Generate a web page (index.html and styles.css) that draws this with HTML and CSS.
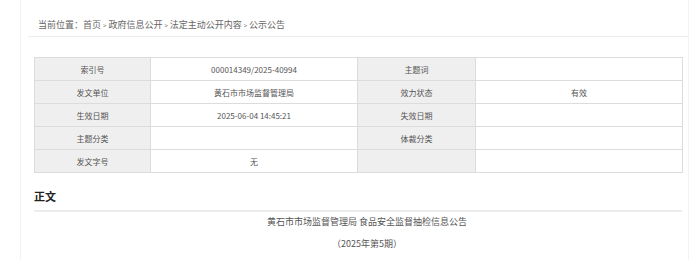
FILE: index.html
```html
<!DOCTYPE html>
<html lang="zh-CN">
<head>
  <meta charset="UTF-8" />
  <meta name="viewport" content="width=device-width, initial-scale=1" />
  <title>公示公告</title>
  <link rel="stylesheet" href="styles.css">
</head>
<body>

  <div class="page">
    <div class="crumb">
      当前位置：<a href="#">首页</a><span class="sep">&gt;</span><a href="#">政府信息公开</a><span class="sep">&gt;</span><a href="#">法定主动公开内容</a><span class="sep">&gt;</span><a href="#">公示公告</a>
    </div>

    <div class="content">
      <table class="meta">
        <colgroup>
          <col class="c-label" />
          <col class="c-value" />
          <col class="c-label2" />
          <col class="c-value" />
        </colgroup>
        <tr>
          <th>索引号</th>
          <td>000014349/2025-40994</td>
          <th>主题词</th>
          <td></td>
        </tr>
        <tr>
          <th>发文单位</th>
          <td>黄石市市场监督管理局</td>
          <th>效力状态</th>
          <td>有效</td>
        </tr>
        <tr>
          <th>生效日期</th>
          <td>2025-06-04 14:45:21</td>
          <th>失效日期</th>
          <td></td>
        </tr>
        <tr>
          <th>主题分类</th>
          <td></td>
          <th>体裁分类</th>
          <td></td>
        </tr>
        <tr>
          <th>发文字号</th>
          <td>无</td>
          <th></th>
          <td></td>
        </tr>
      </table>

      <h2 class="section-title">正文</h2>

      <div class="article">
        <p>黄石市市场监督管理局 食品安全监督抽检信息公告</p>
        <p class="issue">（2025年第5期）</p>
      </div>
    </div>
  </div>

</body>
</html>
```

FILE: styles.css
```css
body {
  margin: 0;
  background: #fff;
  color: #555;
  font-family: "Noto Sans CJK SC", "Noto Sans", sans-serif;
}
a {
  color: inherit;
  text-decoration: none;
}
.page {
  margin-left: 20px;
  width: 667px;
  min-height: 260px;
  border-left: 1px solid #f3f3f3;
  border-right: 1px solid #f3f3f3;
}
.crumb {
  margin-left: 7px;
  padding: 19px 0 0 10px;
  height: 17px;
  line-height: 12px;
  font-size: 9px;
  color: #666;
  border-bottom: 1px solid #ececec;
}
.crumb .sep {
  margin: 0 2px;
  font-size: 6px;
}
.content {
  margin: 20px 6px 0 13px;
}
.meta {
  width: 648px;
  border-collapse: collapse;
  table-layout: fixed;
  font-size: 8px;
}
.c-label { width: 116px; }
.c-value { width: 207px; }
.c-label2 { width: 118px; }
.meta th, .meta td {
  height: 22px;
  padding: 0;
  border: 1px solid #dcdcdc;
  text-align: center;
  font-weight: normal;
  color: #555;
}
.meta th {
  background: #efefef;
}
.section-title {
  margin: 13px 0 0;
  padding-bottom: 4px;
  line-height: 20px;
  font-size: 11px;
  font-weight: bold;
  color: #222;
  border-bottom: 2px solid #ececec;
}
.article p {
  margin: 0;
  line-height: 20px;
  font-size: 9px;
  text-align: center;
  text-indent: 2em;
  color: #555;
}
.article .issue {
  margin-top: 2px;
}
```
